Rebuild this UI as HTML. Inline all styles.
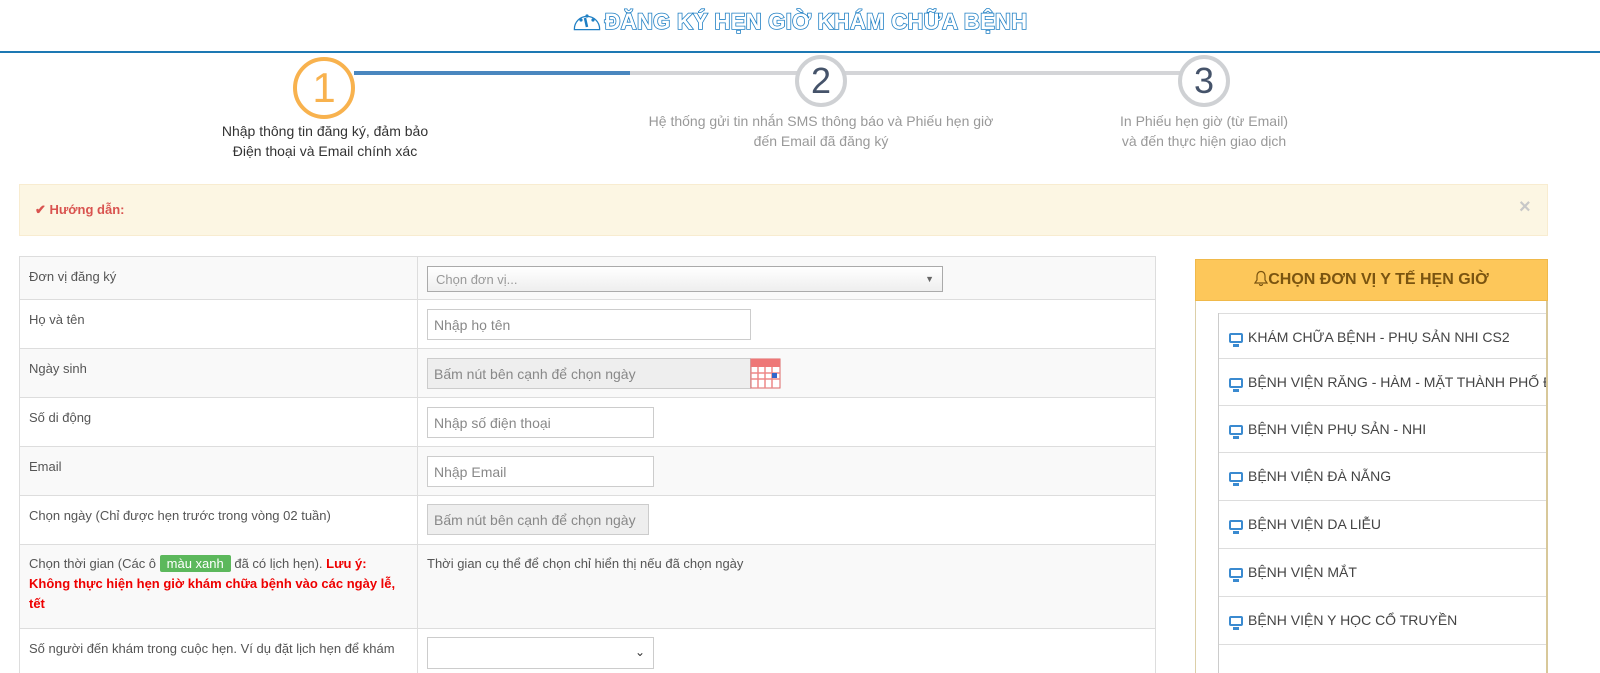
<!DOCTYPE html>
<html style="overflow:hidden"><head><meta charset="utf-8"><style>
*{box-sizing:border-box;margin:0;padding:0}
html,body{overflow:hidden}
body{width:1600px;height:673px;background:#fff;font-family:"Liberation Sans",Arial,sans-serif;color:#333;position:relative}
.a{position:absolute}
.title{left:0;width:1600px;top:9px;text-align:center;font-size:22px;font-weight:bold;color:#fff;-webkit-text-stroke:1.6px #1f7fc4;letter-spacing:0.3px;paint-order:stroke fill}
.hr{left:0;width:1600px;top:51px;height:2px;background:#1d78b3}
.circ{border-radius:50%;text-align:center;font-family:"Liberation Sans",sans-serif}
.st{text-align:center;font-size:14px;line-height:20px}
.row{left:19px;width:1137px;border-top:1px solid #ddd;font-size:13px;color:#555}
.row.g{background:#f9f9f9}
.lab{position:absolute;left:10px;top:10px;width:380px;line-height:20px}
.vl{position:absolute;left:398px;top:0;bottom:0;border-left:1px solid #ddd}
.inp{position:absolute;left:408px;height:31px;border:1px solid #ccc;background:#fff;font-size:14px;color:#888;padding:7px 6px;line-height:16px;white-space:nowrap;overflow:hidden}
.inp.dis{background:#eee}
.item{left:1219px;width:327px;height:48px;border-top:1px solid #ddd;font-size:14px;color:#444;padding-left:10px;line-height:47px;white-space:nowrap;overflow:hidden}
.mon{display:inline-block;width:14px;height:10px;border:2px solid #3a8ad0;border-radius:2px;position:relative;margin-right:5px;vertical-align:-1px;background:#fff}
.mon:after{content:"";position:absolute;left:2px;top:9px;width:6px;height:3px;background:#3a8ad0}
</style></head><body>
<div class="a title"><svg width="28" height="22" viewBox="0 0 28 22" style="vertical-align:-3px;margin-right:4px"><path d="M2 19 A12 12 0 1 1 26 19 Z" fill="#fff" stroke="#1f7fc4" stroke-width="2.5"/><circle cx="8" cy="10" r="1.6" fill="#1f7fc4"/><circle cx="14" cy="6" r="1.6" fill="#1f7fc4"/><circle cx="20" cy="10" r="1.6" fill="#1f7fc4"/><path d="M14 17 L12 8" stroke="#1f7fc4" stroke-width="2.5"/></svg>ĐĂNG KÝ HẸN GIỜ KHÁM CHỮA BỆNH</div>
<div class="a hr"></div>
<div class="a" style="left:354px;top:71px;width:276px;height:4px;background:#4a87bf"></div>
<div class="a" style="left:630px;top:71px;width:575px;height:4px;background:#d4d5d8"></div>
<div class="a circ" style="left:293px;top:57px;width:62px;height:62px;border:4px solid #f8b24e;color:#f8b24e;font-size:42px;line-height:54px">1</div>
<div class="a circ" style="left:795px;top:55px;width:52px;height:52px;border:4px solid #cfd1d4;color:#45536a;font-size:36px;line-height:44px;background:#fff">2</div>
<div class="a circ" style="left:1178px;top:55px;width:52px;height:52px;border:4px solid #cfd1d4;color:#45536a;font-size:36px;line-height:44px;background:#fff">3</div>
<div class="a st" style="left:175px;width:300px;top:121px;color:#333">Nhập thông tin đăng ký, đảm bảo<br>Điện thoại và Email chính xác</div>
<div class="a st" style="left:620px;width:402px;top:111px;color:#999">Hệ thống gửi tin nhắn SMS thông báo và Phiếu hẹn giờ<br>đến Email đã đăng ký</div>
<div class="a st" style="left:1054px;width:300px;top:111px;color:#999">In Phiếu hẹn giờ (từ Email)<br>và đến thực hiện giao dịch</div>
<div class="a" style="left:19px;top:184px;width:1529px;height:52px;background:#fcf6e3;border:1px solid #f8ecd0"></div>
<div class="a" style="left:35px;top:202px;font-size:13px;font-weight:bold;color:#d9534f">✔ Hướng dẫn:</div>
<div class="a" style="left:1519px;top:196px;font-size:20px;font-weight:bold;color:#c8c8c8">×</div>

<div class="a row g" style="top:256px;height:43px"><div class="vl"></div><div class="lab">Đơn vị đăng ký</div><div class="inp" style="top:9px;width:516px;height:26px;padding:5px 8px;font-size:13px;color:#999;background:linear-gradient(#fff,#eee);border-color:#aaa">Chọn đơn vị...<span style="position:absolute;right:8px;top:4px;font-size:9px;color:#666">▼</span></div></div>
<div class="a row" style="top:299px;height:49px"><div class="vl"></div><div class="lab">Họ và tên</div><div class="inp" style="top:9px;width:324px">Nhập họ tên</div></div>
<div class="a row g" style="top:348px;height:49px"><div class="vl"></div><div class="lab">Ngày sinh</div><div class="inp dis" style="top:9px;width:324px">Bấm nút bên cạnh để chọn ngày</div>
<svg class="a" style="left:731px;top:9px" width="31" height="31" viewBox="0 0 31 31"><rect x="1" y="1" width="29" height="29" fill="#fff" stroke="#d66"/><rect x="1" y="1" width="29" height="8" fill="#e77"/><g stroke="#e88" stroke-width="1.5"><path d="M1 15H30M1 21H30M8 9V30M15 9V30M22 9V30"/></g><rect x="22" y="15" width="5" height="5" fill="#36c"/></svg></div>
<div class="a row" style="top:397px;height:49px"><div class="vl"></div><div class="lab">Số di động</div><div class="inp" style="top:9px;width:227px">Nhập số điện thoại</div></div>
<div class="a row g" style="top:446px;height:49px"><div class="vl"></div><div class="lab">Email</div><div class="inp" style="top:9px;width:227px">Nhập Email</div></div>
<div class="a row" style="top:495px;height:49px"><div class="vl"></div><div class="lab">Chọn ngày (Chỉ được hẹn trước trong vòng 02 tuần)</div><div class="inp dis" style="top:8px;width:222px">Bấm nút bên cạnh để chọn ngày</div></div>
<div class="a row g" style="top:544px;height:84px"><div class="vl"></div><div class="lab" style="top:9px">Chọn thời gian (Các ô <span style="background:#5cb85c;color:#fff;padding:1px 7px;border-radius:2px">màu xanh</span> đã có lịch hẹn). <b style="color:#e00">Lưu ý: Không thực hiện hẹn giờ khám chữa bệnh vào các ngày lễ, tết</b></div><div style="position:absolute;left:408px;top:9px;line-height:20px">Thời gian cụ thể để chọn chỉ hiển thị nếu đã chọn ngày</div></div>
<div class="a row" style="top:628px;height:45px"><div class="vl"></div><div class="lab">Số người đến khám trong cuộc hẹn. Ví dụ đặt lịch hẹn để khám</div><div class="inp" style="top:8px;width:227px;height:32px"><span style="position:absolute;right:8px;top:6px;color:#333;font-size:12px">⌄</span></div></div>
<div class="a" style="left:19px;top:256px;height:417px;border-left:1px solid #ddd"></div>
<div class="a" style="left:1155px;top:256px;height:417px;border-left:1px solid #ddd"></div>

<div class="a" style="left:1195px;top:259px;width:353px;height:414px;border-left:1px solid #dccfa8;border-right:2px solid #d8c89a;background:#fff"></div>
<div class="a" style="left:1195px;top:259px;width:353px;height:42px;background:#fdc75a;border:1px solid #f0b94a;text-align:center;font-size:16px;font-weight:bold;color:#7a5410;line-height:40px"><svg width="14" height="16" viewBox="0 0 14 16" style="vertical-align:-2px"><path d="M7 1.5C4.5 1.5 3 3.5 3 6v4L1 13h12l-2-3V6c0-2.5-1.5-4.5-4-4.5z M5.5 14a1.5 1.5 0 0 0 3 0" fill="none" stroke="#7a5410" stroke-width="1.2"/></svg>CHỌN ĐƠN VỊ Y TẾ HẸN GIỜ</div>
<div class="a" style="left:1218px;top:313px;height:360px;border-left:1px solid #ccc"></div>
<div class="a item" style="top:313px"><span class="mon"></span>KHÁM CHỮA BỆNH - PHỤ SẢN NHI CS2</div>
<div class="a item" style="top:358px"><span class="mon"></span>BỆNH VIỆN RĂNG - HÀM - MẶT THÀNH PHỐ ĐÀ</div>
<div class="a item" style="top:405px"><span class="mon"></span>BỆNH VIỆN PHỤ SẢN - NHI</div>
<div class="a item" style="top:452px"><span class="mon"></span>BỆNH VIỆN ĐÀ NẴNG</div>
<div class="a item" style="top:500px"><span class="mon"></span>BỆNH VIỆN DA LIỄU</div>
<div class="a item" style="top:548px"><span class="mon"></span>BỆNH VIỆN MẮT</div>
<div class="a item" style="top:596px"><span class="mon"></span>BỆNH VIỆN Y HỌC CỔ TRUYỀN</div>
<div class="a item" style="top:644px;height:29px"></div>
</body></html>
